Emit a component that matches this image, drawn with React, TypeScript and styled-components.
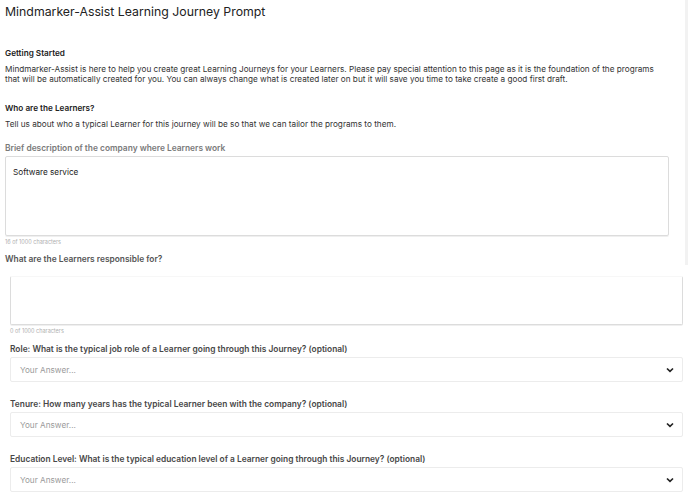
import styled, { createGlobalStyle } from "styled-components";

const GlobalStyle = createGlobalStyle`
  html, body {
    margin: 0;
    padding: 0;
    background: #ffffff;
  }
  body {
    font-family: Inter, "Liberation Sans", sans-serif;
    color: #2f2f2f;
  }
`;

function Chevron() {
  return (
    <svg width="8" height="6" viewBox="0 0 8 6" fill="none">
      <path d="M1 1.5L4 4.3L7 1.5" stroke="#222" strokeWidth="1.7" />
    </svg>
  );
}

const selects = [
  "Role: What is the typical job role of a Learner going through this Journey? (optional)",
  "Tenure: How many years has the typical Learner been with the company? (optional)",
  "Education Level: What is the typical education level of a Learner going through this Journey? (optional)",
];

function App() {
  return (
    <>
      <GlobalStyle />
      <Page>
        <Title>Mindmarker-Assist Learning Journey Prompt</Title>
        <Section $after={19}>
          <SectionTitle>Getting Started</SectionTitle>
          <Paragraph>
            Mindmarker-Assist is here to help you create great Learning Journeys for your Learners. Please pay special
            attention to this page as it is the foundation of the programs that will be automatically created for you.
            You can always change what is created later on but it will save you time to take create a good first draft.
          </Paragraph>
        </Section>
        <Section $after={14}>
          <SectionTitle>Who are the Learners?</SectionTitle>
          <Paragraph>Tell us about who a typical Learner for this journey will be so that we can tailor the programs to them.</Paragraph>
        </Section>
        <Field>
          <FieldLabel tone="light">Brief description of the company where Learners work</FieldLabel>
          <TextBox $height={80} $width={664}>Software service</TextBox>
          <Counter $after={8}>16 of 1000 characters</Counter>
        </Field>
        <Field>
          <FieldLabel tone="mid">What are the Learners responsible for?</FieldLabel>
          <Indented>
            <TextBox $height={49} $noTop $width={673} />
            <Counter $after={9}>0 of 1000 characters</Counter>
          </Indented>
        </Field>
        {selects.map((label) => (
          <SelectField key={label}>
            <FieldLabel tone="dark">{label}</FieldLabel>
            <SelectBox>
              <Placeholder>Your Answer...</Placeholder>
              <Chevron />
            </SelectBox>
          </SelectField>
        ))}
      </Page>
      <ScrollEdge />
    </>
  );
}

export default App;

const Page = styled.div`
  padding: 3px 0 0 5px;
  width: 683px;
  box-sizing: border-box;
`;

const Title = styled.h1`
  margin: 0 0 27px;
  font-size: 12.3px;
  font-weight: 400;
  line-height: 18px;
  color: #222;
`;

const Section = styled.div<{ $after: number }>`
  display: flex;
  flex-direction: column;
  gap: 5px;
  margin-bottom: ${(p) => p.$after}px;
`;

const SectionTitle = styled.div`
  font-size: 8.2px;
  font-weight: 600;
  line-height: 11px;
  color: #222;
`;

const Paragraph = styled.p`
  margin: 0;
  font-size: 8.2px;
  line-height: 10px;
  color: #333;
  max-width: 660px;
`;

const Field = styled.div`
  display: flex;
  flex-direction: column;
`;

const labelColors = {
  light: "#7a7a7a",
  mid: "#555",
  dark: "#474747",
};

const FieldLabel = styled.div<{ tone: keyof typeof labelColors }>`
  font-size: 8.4px;
  font-weight: 600;
  line-height: 11px;
  color: ${(p) => labelColors[p.tone]};
  margin-bottom: 2px;
`;

const Indented = styled.div`
  padding-left: 5px;
  margin-top: 9px;
`;

const TextBox = styled.div<{ $height: number; $width: number; $noTop?: boolean }>`
  box-sizing: border-box;
  width: ${(p) => p.$width}px;
  height: ${(p) => p.$height}px;
  border: 1px solid #dcdcdc;
  border-top-color: ${(p) => (p.$noTop ? "#f7f7f7" : "#dcdcdc")};
  border-radius: 2px;
  padding: 10px 7px;
  font-size: 8.2px;
  line-height: 11px;
  color: #222;
  box-shadow: 0 1px 0 #efefef;
`;

const Counter = styled.div<{ $after: number }>`
  font-size: 5.5px;
  line-height: 8px;
  color: #b0b0b0;
  margin-top: 2px;
  margin-bottom: ${(p) => p.$after}px;
`;

const SelectField = styled.div`
  display: flex;
  flex-direction: column;
  padding-left: 5px;
  margin-bottom: 17px;
`;

const SelectBox = styled.div`
  box-sizing: border-box;
  width: 673px;
  height: 25px;
  border: 1px solid #ececec;
  border-radius: 2px;
  display: flex;
  align-items: center;
  justify-content: space-between;
  padding: 0 8px 0 9px;
`;

const Placeholder = styled.span`
  font-size: 8.2px;
  color: #9a9a9a;
`;

const ScrollEdge = styled.div`
  position: fixed;
  top: 0;
  right: 0;
  width: 3px;
  height: 265px;
  background: #f2f2f2;
`;
